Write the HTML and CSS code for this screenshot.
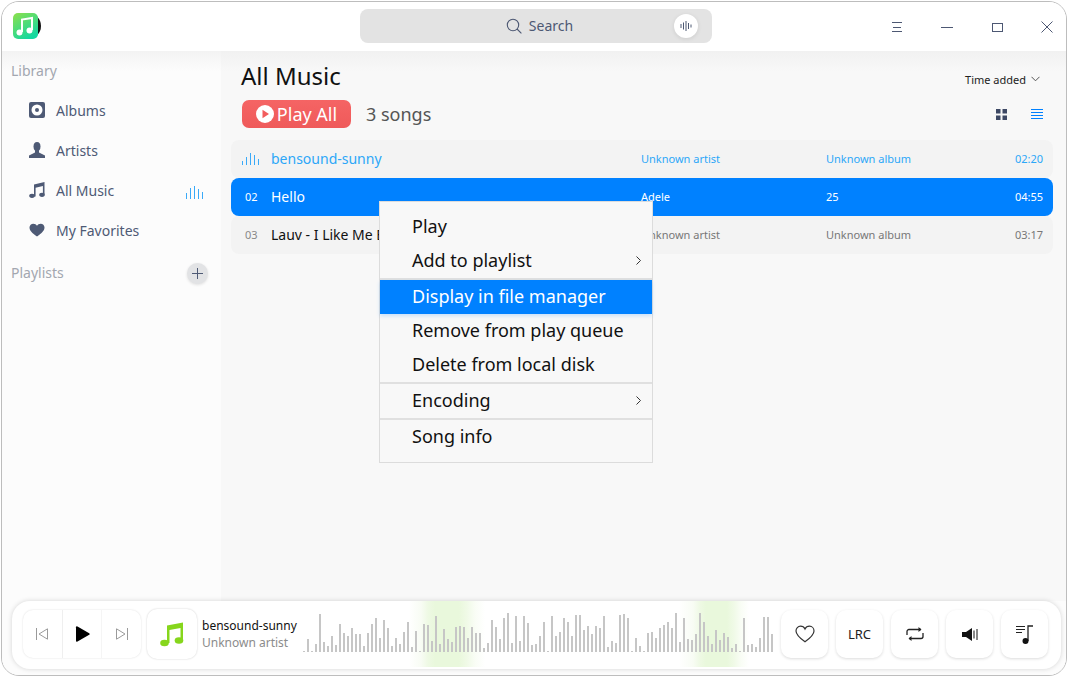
FILE: index.html
```html
<!DOCTYPE html>
<html lang="en">
<head>
    <meta charset="UTF-8">
    <meta name="viewport" content="width=device-width, initial-scale=1.0">
    <title>Music</title>
    <link rel="stylesheet" href="styles.css">
</head>
<body>

<div class="window">

    <header class="titlebar">
        <div class="logo">
            <svg width="30" height="28" viewBox="0 0 30 28">
                <defs>
                    <linearGradient id="logoGrad" x1="0" y1="0" x2="0.6" y2="1">
                        <stop offset="0" stop-color="#8ee04a"/>
                        <stop offset="1" stop-color="#15d8a0"/>
                    </linearGradient>
                </defs>
                <circle cx="15" cy="13" r="13" fill="#111"/>
                <rect x="0" y="0" width="25" height="26" rx="5" fill="url(#logoGrad)"/>
                <path d="M9 19V6.5L19 5v12" fill="none" stroke="#fff" stroke-width="2"/>
                <circle cx="6.5" cy="19.5" r="3" fill="#fff"/>
                <circle cx="16.5" cy="17.5" r="3" fill="#fff"/>
            </svg>
        </div>
        <div class="search">
            <svg width="16" height="16" viewBox="0 0 16 16" fill="none" stroke="#4d5873" stroke-width="1.1">
                <circle cx="7" cy="7" r="5.7"/>
                <path d="M11 11l4.4 4.4"/>
            </svg>
            <span>Search</span>
            <button class="voice">
                <svg width="12" height="12" viewBox="0 0 12 12" stroke="#4d5873" stroke-width="1">
                    <path d="M1 4v4M3.500 2.500v7M6 1v10M8.500 3v6M11 4.500v3"/>
                </svg>
            </button>
        </div>
        <div class="winbtns">
            <svg width="12" height="12" viewBox="0 0 12 12" stroke="#4d5873"><path d="M1 1.500h10M2 6.500h8M1 10.500h10"/></svg>
            <svg width="12" height="12" viewBox="0 0 12 12" stroke="#4d5873"><path d="M0 6.500h12"/></svg>
            <svg width="12" height="12" viewBox="0 0 12 12" fill="none" stroke="#4d5873"><rect x="1.500" y="2.500" width="10" height="8"/></svg>
            <svg width="12" height="12" viewBox="0 0 12 12" stroke="#4d5873"><path d="M.5.500l11 11M11.500.500l-11 11"/></svg>
        </div>
    </header>

    <div class="content">
        <aside class="sidebar">
            <div class="side-title">Library</div>
            <ul class="side-list">
                <li>
                    <svg width="16" height="16" viewBox="0 0 16 16">
                        <rect width="16" height="16" rx="2" fill="#4e5a75"/>
                        <circle cx="8" cy="8" r="5.500" fill="#fff"/>
                        <circle cx="8" cy="8" r="2" fill="#4e5a75"/>
                    </svg>
                    <span>Albums</span>
                </li>
                <li>
                    <svg width="16" height="16" viewBox="0 0 16 16" fill="#4e5a75">
                        <ellipse cx="8" cy="4.500" rx="3.500" ry="4.500"/>
                        <path d="M6 8h4v2.500l6 3V16H0v-2.500l6-3z"/>
                    </svg>
                    <span>Artists</span>
                </li>
                <li>
                    <svg width="16" height="16" viewBox="0 0 16 16" fill="#4e5a75">
                        <path d="M5 2.500L15.500 0v12.500h-1.600V4L6.600 5.700V14.500H5z"/>
                        <ellipse cx="3" cy="13.800" rx="2.800" ry="2.100"/>
                        <ellipse cx="13" cy="12.800" rx="2.800" ry="2.100"/>
                    </svg>
                    <span>All Music</span>
                    <svg class="eq-side" width="18" height="14" viewBox="0 0 18 14" stroke="#3aaaf8"><path d="M.5 14V8M4.500 14V3M8.500 14V1M12.500 14V4M16.500 14V7"/></svg>
                </li>
                <li>
                    <svg width="16" height="16" viewBox="0 0 16 16" fill="#4e5a75">
                        <path d="M8 14.500C3 11 .5 8.500.5 5.500.5 3.200 2.300 1.700 4.300 1.700c1.600 0 3 .8 3.700 2.100.7-1.300 2.100-2.100 3.700-2.100 2 0 3.800 1.500 3.800 3.800 0 3-2.500 5.500-7.500 9z"/>
                    </svg>
                    <span>My Favorites</span>
                </li>
            </ul>
            <div class="side-head">
                <div class="side-title">Playlists</div>
                <button class="add-btn">
                    <svg width="11" height="11" viewBox="0 0 11 11" stroke="#4e5a75"><path d="M0 5.500h11M5.500 0v11"/></svg>
                </button>
            </div>
        </aside>

        <main class="main">
            <div class="main-top">
                <h1>All Music</h1>
                <div class="sort">Time added
                    <svg width="9" height="6" viewBox="0 0 9 6" fill="none" stroke="#555"><path d="M.5 .8l4 4 4-4"/></svg>
                </div>
            </div>
            <div class="main-bar">
                <button class="play-all">
                    <svg width="18" height="18" viewBox="0 0 18 18">
                        <circle cx="9" cy="9" r="9" fill="#fff"/>
                        <path d="M6.500 4.800l6.500 4.200-6.500 4.200z" fill="#f25c5c"/>
                    </svg>
                    Play All
                </button>
                <span class="count">3 songs</span>
                <div class="view-btns">
                    <svg width="11" height="11" viewBox="0 0 11 11" fill="#3d4864">
                        <rect width="4.500" height="4.500"/><rect x="6.500" width="4.500" height="4.500"/>
                        <rect y="6.500" width="4.500" height="4.500"/><rect x="6.500" y="6.500" width="4.500" height="4.500"/>
                    </svg>
                    <svg width="12" height="11" viewBox="0 0 12 11" stroke="#0081ff"><path d="M0 .5h12M0 3.500h12M0 6.500h12M0 9.500h12"/></svg>
                </div>
            </div>

            <div class="songs">
                <div class="song playing">
                    <svg width="18" height="14" viewBox="0 0 18 14" stroke="#3aaaf8"><path d="M.5 14V10M4.500 14V6M8.500 14V2M12.500 14V4M16.500 14V8"/></svg>
                    <span class="song-name">bensound-sunny</span>
                    <span class="song-meta">Unknown artist</span>
                    <span class="song-meta">Unknown album</span>
                    <span class="song-meta song-time">02:20</span>
                </div>
                <div class="song selected">
                    <span class="song-num">02</span>
                    <span class="song-name">Hello</span>
                    <span class="song-meta">Adele</span>
                    <span class="song-meta">25</span>
                    <span class="song-meta song-time">04:55</span>
                </div>
                <div class="song">
                    <span class="song-num">03</span>
                    <span class="song-name">Lauv - I Like Me Better</span>
                    <span class="song-meta">Unknown artist</span>
                    <span class="song-meta">Unknown album</span>
                    <span class="song-meta song-time">03:17</span>
                </div>
            </div>
        </main>
    </div>

    <footer class="player-wrap">
        <div class="player">
            <div class="transport">
                <button>
                    <svg width="12" height="12" viewBox="0 0 12 12" fill="none" stroke="#9a9a9a"><path d="M.5 0v12M11.500 .8v10.400L3 6z"/></svg>
                </button>
                <button class="play-btn">
                    <svg width="15" height="16" viewBox="0 0 15 16"><path d="M1 1.200a1 1 0 0 1 1.500-.8L14.200 7.200a1 1 0 0 1 0 1.600L2.500 15.600a1 1 0 0 1-1.500-.8z"/></svg>
                </button>
                <button>
                    <svg width="12" height="12" viewBox="0 0 12 12" fill="none" stroke="#9a9a9a"><path d="M11.500 0v12M.5 .8v10.400L9 6z"/></svg>
                </button>
            </div>
            <div class="cover">
                <svg width="24" height="26" viewBox="0 0 24 26" fill="#86d61c">
                    <path d="M7 4.500L23 1.500v18.500h-2.500V7L9.500 9v13H7z"/>
                    <ellipse cx="4.500" cy="22" rx="4.300" ry="3.300"/>
                    <ellipse cx="19" cy="19.500" rx="4.300" ry="3.300"/>
                </svg>
            </div>
            <div class="now">
                <div class="now-title">bensound-sunny</div>
                <div class="now-artist">Unknown artist</div>
            </div>
            <div class="wave" id="wave"></div>
            <div class="tools">
                <button>
                    <svg width="20" height="18" viewBox="0 0 20 18" fill="none" stroke="#333" stroke-width="1.200"><path d="M10 16.800C4 12.500 1 9.500 1 6 1 3.200 3 1.200 5.500 1.200 7.500 1.200 9.200 2.300 10 4c.8-1.700 2.500-2.800 4.500-2.800C17 1.200 19 3.200 19 6c0 3.500-3 6.500-9 10.800z"/></svg>
                </button>
                <button class="lrc">LRC</button>
                <button>
                    <svg width="18" height="16" viewBox="0 0 18 16" fill="none" stroke="#222" stroke-width="1.300"><path d="M1 9V5.500A2 2 0 0 1 3 3.500h12M17 7v3.500a2 2 0 0 1-2 2H3"/><path d="M12.500 1l3 2.500-3 2.500M5.500 10l-3 2.500 3 2.500" fill="#222" stroke="none"/></svg>
                </button>
                <button>
                    <svg width="16" height="13" viewBox="0 0 16 13"><path d="M0 4h4l6-4v13L4 9H0z" fill="#111"/><path d="M12 2.500v8M15 1v11" stroke="#111" fill="none"/></svg>
                </button>
                <button>
                    <svg width="18" height="19" viewBox="0 0 18 19"><path d="M0 1.500h9M0 4.500h9M0 7.500h6" stroke="#222" fill="none"/><path d="M17 1h-5v15" stroke="#222" stroke-width="1.300" fill="none"/><circle cx="9.500" cy="16" r="3" fill="#111"/></svg>
                </button>
            </div>
        </div>
    </footer>

    <div class="menu">
        <div class="menu-item">Play</div>
        <div class="menu-item has-sub">Add to playlist
            <svg width="5" height="9" viewBox="0 0 5 9" fill="none" stroke="#333"><path d="M.5 .5l4 4-4 4"/></svg>
        </div>
        <div class="menu-sep"></div>
        <div class="menu-item active">Display in file manager</div>
        <div class="menu-item">Remove from play queue</div>
        <div class="menu-item">Delete from local disk</div>
        <div class="menu-sep"></div>
        <div class="menu-item has-sub">Encoding
            <svg width="5" height="9" viewBox="0 0 5 9" fill="none" stroke="#333"><path d="M.5 .5l4 4-4 4"/></svg>
        </div>
        <div class="menu-sep"></div>
        <div class="menu-item">Song info</div>
    </div>

</div>

<script src="script.js"></script>
</body>
</html>
```

FILE: styles.css
```css
* { box-sizing: border-box; }
html, body { margin: 0; padding: 0; height: 100%; background: #fff; overflow: hidden; }
body { font-family: "Noto Sans", sans-serif; color: #111; }
button { font-family: inherit; border: none; padding: 0; background: none; }
svg { display: block; flex: none; }

.window { position: relative; margin: 1px 0 0 1px; width: 1066px; height: 675px; border: 1px solid #bdbdbd; border-radius: 18px; overflow: hidden; background: #fcfcfc; display: flex; flex-direction: column; }

/* title bar */
.titlebar { height: 49px; flex: none; background: #fff; display: flex; align-items: center; }
.logo { width: 358px; padding: 0 0 0 11px; }
.search { width: 352px; height: 34px; margin-top: -2px; padding-left: 7px; background: #e3e3e3; border-radius: 8px; position: relative; display: flex; align-items: center; justify-content: center; gap: 7px; color: #4d5873; font-size: 14px; }
.voice { position: absolute; right: 14px; top: 5px; width: 24px; height: 24px; border-radius: 50%; background: #fff; box-shadow: 0 1px 4px rgba(0,0,0,.1); display: flex; align-items: center; justify-content: center; }
.winbtns { flex: 1; display: flex; justify-content: flex-end; gap: 38px; padding-right: 13px; }

/* body */
.content { flex: 1; display: flex; min-height: 0; }
.sidebar { width: 219px; flex: none; padding: 8px 9px 0; background: linear-gradient(#f3f3f3, #fcfcfc 20px); }
.side-title { font-size: 14px; color: #a3a7b0; line-height: 24px; }
.side-list { list-style: none; margin: 7px 0 0; padding: 0; }
.side-list li { height: 40px; display: flex; align-items: center; gap: 11px; padding-left: 18px; font-size: 14px; color: #4e5a75; }
.eq-side { margin-left: auto; margin-right: 8px; margin-top: 4px; }
.side-head { display: flex; align-items: center; justify-content: space-between; margin-top: 11px; padding-right: 4px; }
.add-btn { width: 21px; height: 21px; border-radius: 50%; background: #e2e3e5; box-shadow: 0 1px 3px rgba(0,0,0,.12); display: flex; align-items: center; justify-content: center; }

.main { flex: 1; background: linear-gradient(#f1f1f1, #f8f8f8 20px); padding: 8px 13px 0 10px; }
.main-top { display: flex; justify-content: space-between; align-items: center; padding: 0 13px 0 10px; height: 34px; }
h1 { margin: 0; font-size: 24px; font-weight: 400; color: #111; line-height: 34px; }
.sort { display: flex; align-items: center; gap: 5px; font-size: 11px; color: #222; margin-top: 6px; }
.main-bar { display: flex; align-items: center; height: 28px; margin-top: 7px; padding: 0 10px 0 11px; }
.play-all { width: 109px; height: 28px; border-radius: 7px; background: linear-gradient(#f56464, #ef5a5a); color: #fff; font-size: 18px; display: flex; align-items: center; justify-content: center; gap: 3px; }
.count { margin-left: 15px; font-size: 18px; color: #555; }
.view-btns { margin-left: auto; display: flex; align-items: center; gap: 24px; }

.songs { margin-top: 12px; }
.song { height: 38px; border-radius: 8px; padding: 0 10px 2px 11px; display: grid; grid-template-columns: 29px 370px 185px 1fr auto; align-items: center; background: #f3f3f3; }
.song.playing { color: #2ca7f8; }
.song.playing .song-meta { color: #2ca7f8; }
.song.selected { background: #0081ff; color: #fff; }
.song.selected .song-meta, .song.selected .song-num { color: #fff; }
.song-num { font-size: 11px; color: #888; padding-left: 3px; }
.song-name { font-size: 14px; }
.song-meta { font-size: 11px; color: #777; }
.song-time { text-align: right; }

/* player */
.player-wrap { flex: none; height: 74px; padding: 0 5px 6px 10px; background: #fcfcfc; }
.player { height: 68px; border-radius: 18px; background: #fff; box-shadow: 0 0 5px rgba(0,0,0,.16); display: flex; align-items: center; padding: 0 12px 2px 11px; }
.transport { width: 118px; height: 48px; flex: none; display: flex; border-radius: 10px; box-shadow: 0 0 2px rgba(0,0,0,.14); }
.transport button { flex: 1; display: flex; align-items: center; justify-content: center; }
.play-btn { border-left: 1px solid #efefef; border-right: 1px solid #f5f5f5; }
.play-btn svg { margin-left: 1px; }
.cover { width: 50px; height: 50px; flex: none; margin-left: 6px; border-radius: 10px; box-shadow: 0 0 2px rgba(0,0,0,.2); display: flex; align-items: center; justify-content: center; }
.now { width: 101px; flex: none; margin-left: 5px; font-size: 12px; line-height: 17px; white-space: nowrap; }
.now-title { color: #111; }
.now-artist { color: #8c8c8c; }
.wave { width: 474px; height: 66px; flex: none; display: flex; align-items: flex-end; gap: 2px; padding: 0 0 15px 0; background: linear-gradient(90deg, transparent 106px, #f8fcf4 118px, #eef9e4 125px, #e9f8dc 132px, #e9f8dc 156px, #f0fae7 164px, #f9fdf5 172px, transparent 182px, transparent 376px, #f8fcf4 390px, #eef9e4 397px, #e9f8dc 403px, #e9f8dc 424px, #f0fae7 431px, #f9fdf5 438px, transparent 446px); }
.bar { width: 2px; background: #c6c6c6; flex: none; }
.tools { display: flex; gap: 8px; margin-left: 4px; }
.tools button { width: 47px; height: 48px; border-radius: 10px; background: #fff; box-shadow: 0 1px 3px rgba(0,0,0,.14); display: flex; align-items: center; justify-content: center; }
.tools .lrc { font-size: 13px; color: #222; }

/* context menu */
.menu { position: absolute; left: 377px; top: 199px; width: 274px; height: 262px; padding: 8px 0; background: #f8f8f8; border: 1px solid #dcdcdc; }
.menu-item { height: 34px; padding: 0 11px 2px 32px; font-size: 18px; color: #111; display: flex; align-items: center; justify-content: space-between; }
.menu-item.active { background: #0081ff; color: #fff; box-shadow: 0 2px 4px rgba(0,129,255,.2); }
.menu-sep { height: 2px; background: #e0e0e0; }
```

FILE: script.js
```js
// bar heights of the waveform, left to right
const heights = [
    1, 13, 1, 8, 38, 10, 6, 16, 7, 28, 19, 16, 24, 18, 18, 6, 19, 28, 34, 14,
    32, 24, 6, 14, 8, 20, 30, 5, 21, 1, 28, 27, 11, 36, 8, 23, 13, 10, 25, 26,
    25, 14, 25, 19, 19, 4, 9, 32, 25, 13, 34, 39, 9, 36, 11, 36, 29, 7, 8,
    16, 30, 1, 36, 16, 20, 34, 30, 16, 37, 37, 22, 26, 18, 26, 24, 36, 5, 11,
    9, 37, 38, 34, 1, 14, 6, 1, 19, 20, 14, 24, 27, 30, 24, 39, 10, 34, 13, 12,
    18, 39, 30, 16, 8, 22, 12, 19, 15, 4, 8, 1, 34, 7, 8, 5, 14, 35, 35, 18
];

let wave = document.getElementById("wave");
heights.forEach(function (h) {
    let bar = document.createElement("div");
    bar.className = "bar";
    bar.style.height = h + "px";
    wave.appendChild(bar);
});
```
